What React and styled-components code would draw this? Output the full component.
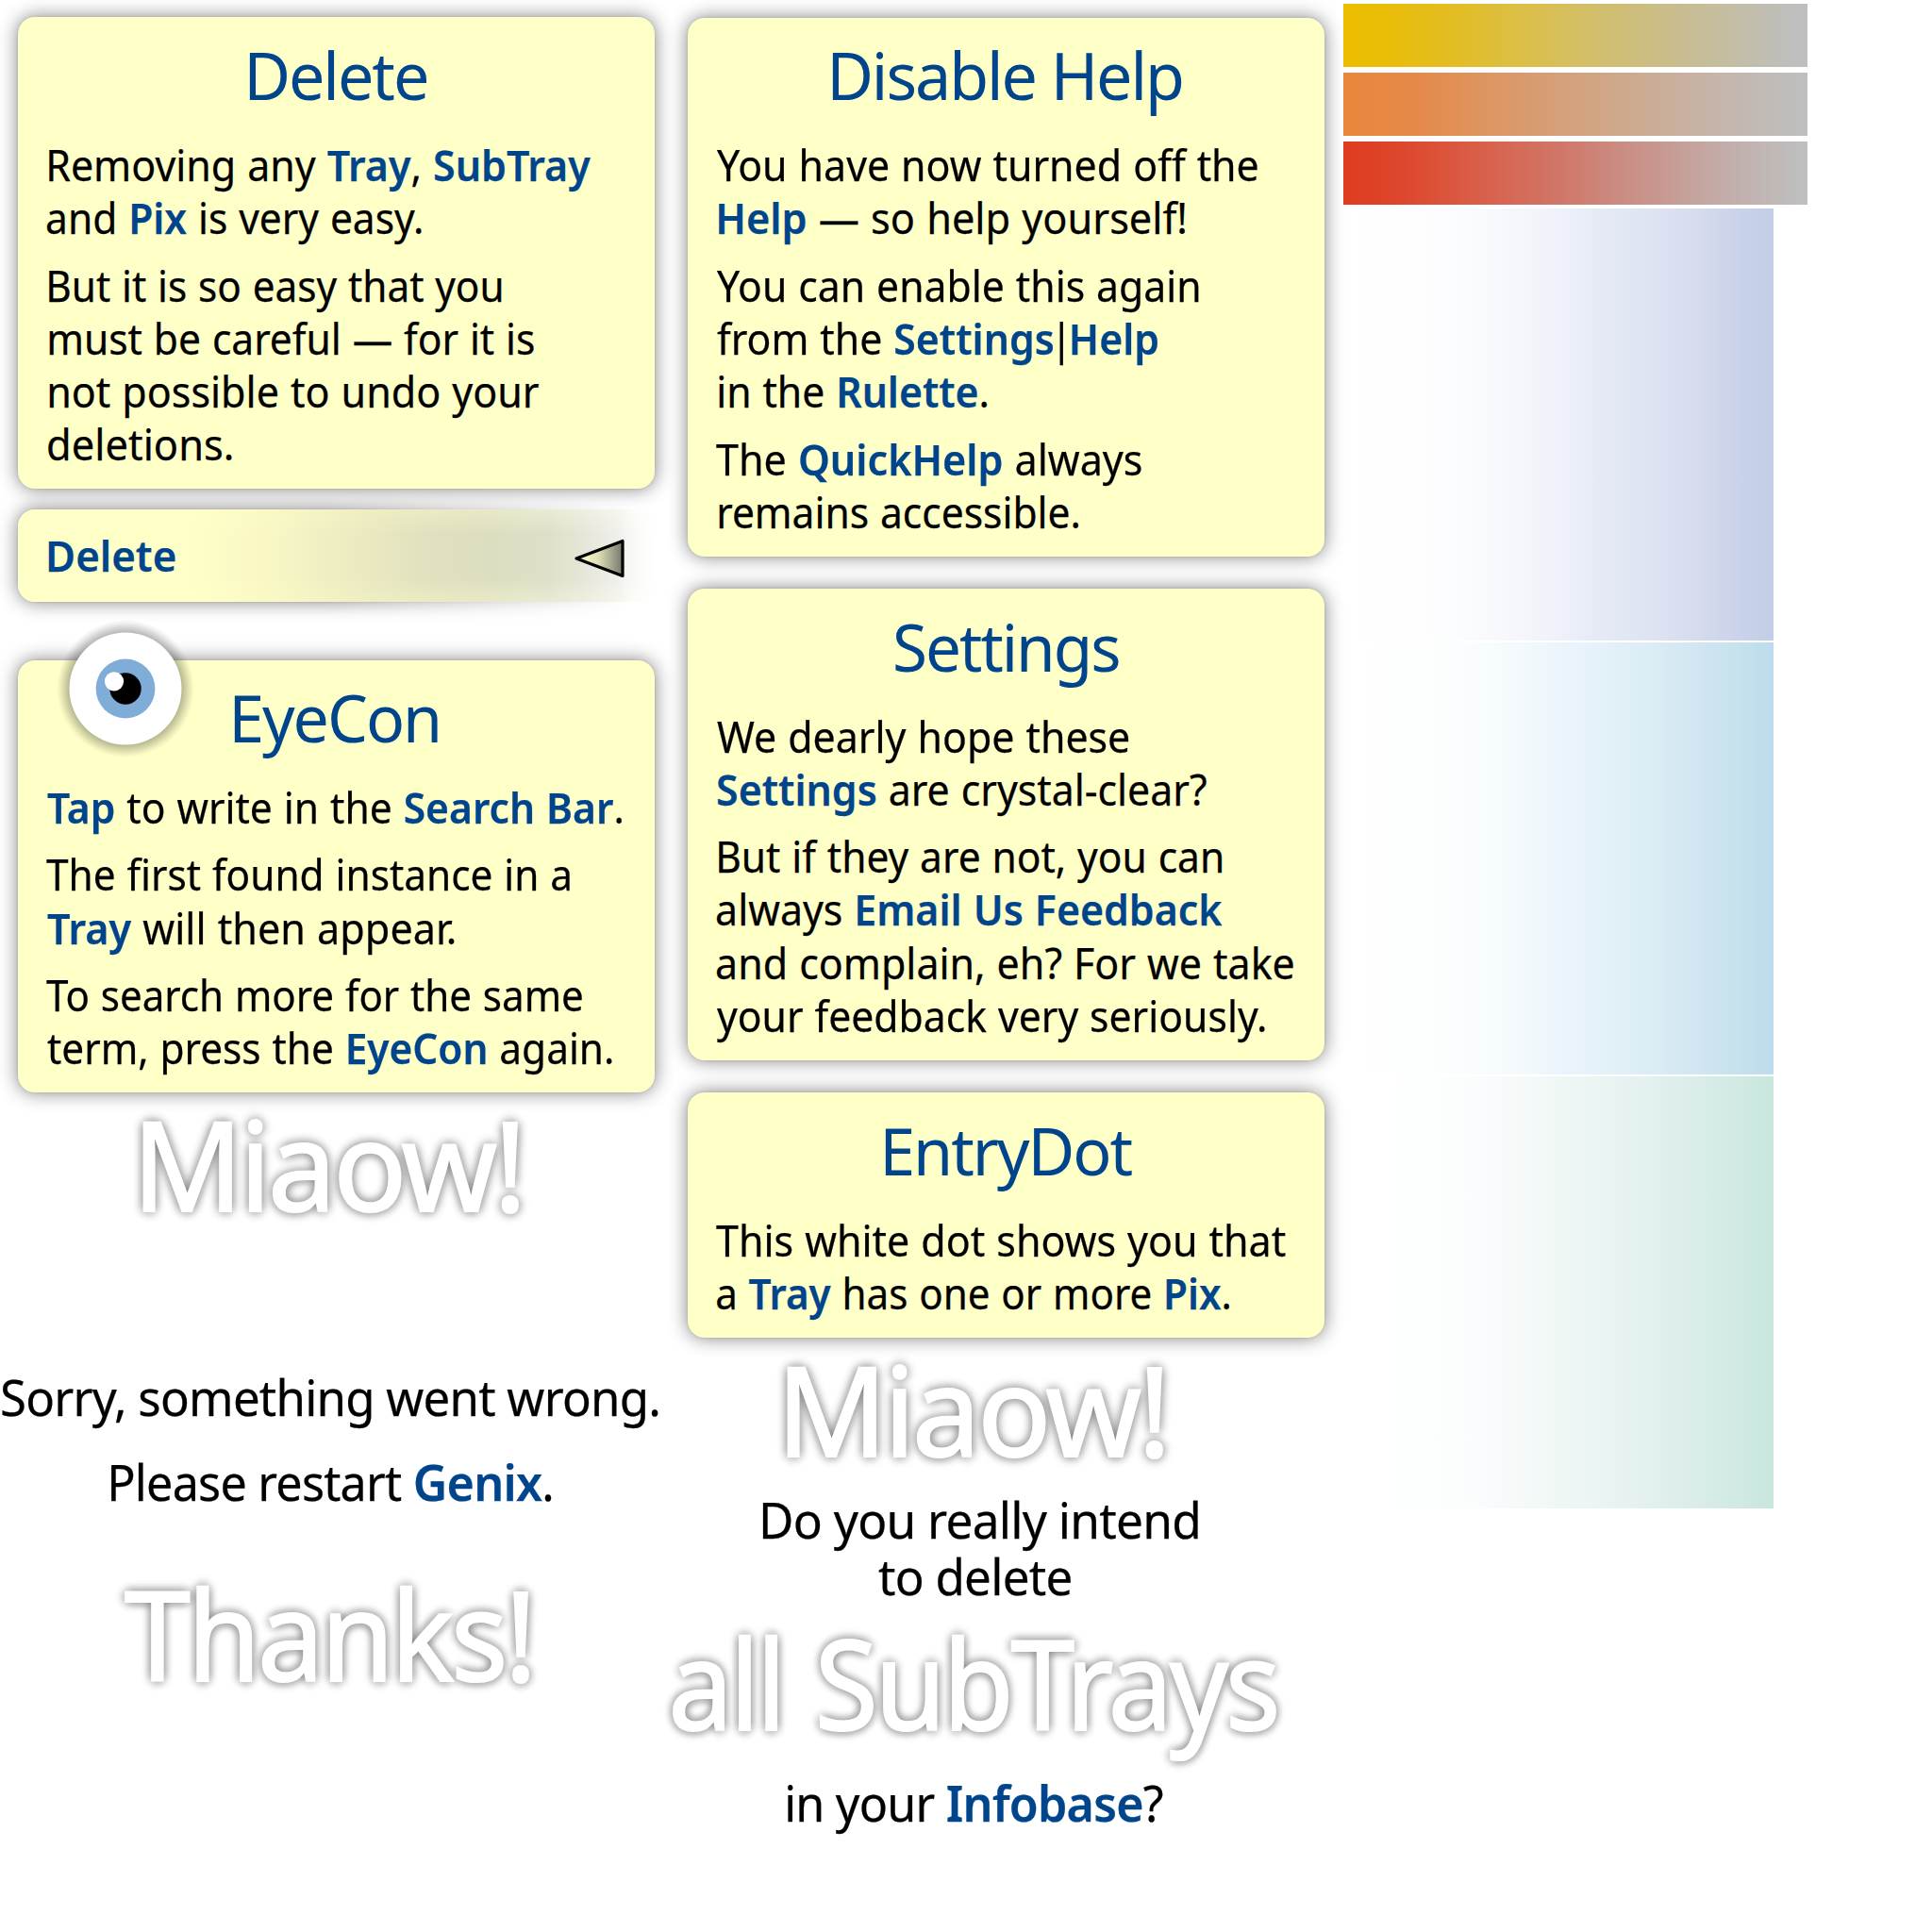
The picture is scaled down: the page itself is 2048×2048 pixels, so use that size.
import React, { useLayoutEffect, useRef, useState } from 'react';
import styled, { createGlobalStyle, css } from 'styled-components';

const FONT = '"Noto Sans", "Open Sans", sans-serif';
const NAVY = '#00458c';
const PAPER = '#ffffc8';

const GlobalStyle = createGlobalStyle`
  * { box-sizing: border-box; }
  html, body { margin: 0; padding: 0; background: #fff; }
  body { font-family: ${FONT}; color: #000; }
`;

const Page = styled.main`
  display: grid;
  grid-template-columns: 710px 714px 1fr;
  width: 2048px;
  height: 2048px;
  overflow: hidden;
  background: #fff;
`;

const Column = styled.section`
  display: flex;
  flex-direction: column;
  padding-top: ${(p) => p.$top}px;
`;

const softShadow = css`
  box-shadow: 0 0 3px rgba(0, 0, 0, 0.12), 0 0 19px 1px rgba(0, 0, 0, 0.45);
`;

const Card = styled.article`
  position: relative;
  flex: none;
  width: 675px;
  height: ${(p) => p.$h}px;
  margin: 0 0 ${(p) => p.$gap}px 19px;
  padding: ${(p) => p.$pad}px 31px 0;
  border-radius: 18px;
  background: ${PAPER};
  ${softShadow}
`;

const Row = styled.div`
  display: flex;
  flex: none;
  justify-content: ${(p) => (p.$center ? 'center' : 'flex-start')};
  white-space: pre;
`;

const Title = styled(Row)`
  height: 84px;
  line-height: 84px;
  margin-bottom: 26.1px;
  font-size: 70px;
  letter-spacing: -0.03em;
  color: ${NAVY};
`;

const Paragraph = styled.div`
  & + & { margin-top: 15px; }
`;

const BodyLine = styled(Row)`
  height: 56.28px;
  line-height: 56.28px;
  font-size: 45px;
  word-spacing: 0.02em;
  -webkit-text-stroke: 0.25px currentColor;
`;

const NoticeLine = styled(Row)`
  height: 60px;
  line-height: 60px;
  margin-top: ${(p) => p.$mt}px;
  font-size: 52px;
  letter-spacing: -0.015em;
  -webkit-text-stroke: 0.25px currentColor;
`;

const spread = (r, blur, alpha) => [[1, 0], [0.7, 0.7], [0, 1], [-0.7, 0.7], [-1, 0], [-0.7, -0.7], [0, -1], [0.7, -0.7]]
  .map(([x, y]) => `${x * r}px ${y * r}px ${blur}px rgba(0, 0, 0, ${alpha})`)
  .join(', ');

const GlowLine = styled(Row)`
  height: 160px;
  line-height: 160px;
  margin-top: ${(p) => p.$mt}px;
  font-size: 132px;
  font-weight: 450;
  letter-spacing: -0.025em;
  word-spacing: 0.04em;
  color: #fff;
  -webkit-text-stroke: 2.2px #fff;
  text-shadow: ${spread(5, 5, 0.045)}, ${spread(9, 6, 0.055)};
`;

const Notice = styled.div`
  display: flex;
  flex-direction: column;
  width: ${(p) => p.$w}px;
`;

const Term = styled.strong`
  font-weight: 600;
  color: ${NAVY};
`;

const Pipe = styled.span`
  margin: 0 -4.5px;
`;

const FitBox = styled.span`
  display: block;
  flex: none;
  width: ${(p) => p.$w}px;
  margin-left: ${(p) => p.$nudge}px;
`;

const FitText = styled.span`
  display: inline-block;
  transform-origin: 0 50%;
`;

function edgeBearing(node, last) {
  let n = node;
  while (n.nodeType !== 3) n = last ? n.lastChild : n.firstChild;
  const style = getComputedStyle(n.parentElement);
  const ctx = document.createElement('canvas').getContext('2d');
  ctx.font = `${style.fontWeight} ${style.fontSize} ${style.fontFamily}`;
  const text = n.textContent;
  const m = ctx.measureText(last ? text.slice(-1) : text[0]);
  return last ? m.width - m.actualBoundingBoxRight : -m.actualBoundingBoxLeft;
}

/* Condenses a line horizontally so that its ink is exactly `w` wide. */
function Fit({ w, nudge = 0, children }) {
  const ref = useRef(null);
  const [fit, setFit] = useState(null);
  useLayoutEffect(() => {
    const el = ref.current;
    el.style.transform = 'none';
    const spacing = parseFloat(getComputedStyle(el).letterSpacing) || 0;
    const left = edgeBearing(el, false);
    const right = edgeBearing(el, true);
    const scale = w / (el.getBoundingClientRect().width - spacing - left - right);
    const transform = `translateX(${-left * scale}px) scaleX(${scale})`;
    el.style.transform = transform;
    setFit(transform);
  }, [w]);
  return (
    <FitBox $w={w} $nudge={nudge}>
      <FitText ref={ref} style={{ transform: fit || 'none' }}>{children}</FitText>
    </FitBox>
  );
}

/* Words between asterisks are highlighted terms. */
function rich(text) {
  return text.split('*').map((part, i) => {
    if (!part) return null;
    if (part === '|') return <Pipe key={i}>|</Pipe>;
    return i % 2 ? <Term key={i}>{part}</Term> : part;
  }).filter(Boolean);
}

function HelpCard({ h, gap, pad = 18.6, title, titleW, titleNudge = 2, paragraphs, children }) {
  return (
    <Card $h={h} $gap={gap} $pad={pad}>
      {children}
      <Title $center><Fit w={titleW} nudge={titleNudge}>{title}</Fit></Title>
      {paragraphs.map((lines, i) => (
        <Paragraph key={i}>
          {lines.map(([text, from, to]) => (
            <BodyLine key={text}><Fit w={to - from} nudge={from}>{rich(text)}</Fit></BodyLine>
          ))}
        </Paragraph>
      ))}
    </Card>
  );
}

const Bar = styled.div`
  position: relative;
  flex: none;
  display: flex;
  align-items: center;
  justify-content: space-between;
  width: 675px;
  height: 97.5px;
  margin: 0 0 62.5px 19px;
  padding: 0 32px 0 33px;
`;

const fade = (from, to) => css`
  mask-image: linear-gradient(90deg, #000 ${from}, transparent ${to});
`;

const BarShade = styled.div`
  position: absolute;
  inset: 0;
  border-radius: 18px 0 0 18px;
  background: linear-gradient(90deg, ${PAPER} 0 28%, #fafac6 40%, #f0efc3 56%, #ebebc6 72%, #ecedd4 83%, #f2f2e6 91%, #fff 100%);
  ${fade('94%', '101%')}
  &::after {
    content: '';
    display: block;
    height: 100%;
    border-radius: inherit;
    background: linear-gradient(90deg, ${PAPER} 0 26%, #f9f8c5 38%, #edecc2 51%, #e1e1bf 64%, #dddec1 75%, #dfdfc8 83%, #e6e6da 89%, #efefea 94%, #fbfbfa 100%);
    mask-image: linear-gradient(180deg, rgba(0, 0, 0, 0.15), #000 25% 75%, rgba(0, 0, 0, 0.15));
  }
`;

const BarShadow = styled.div`
  position: absolute;
  inset: -24px 0 -24px -19px;
  padding: 24px 0 24px 19px;
  ${fade('50%', '96%')}
  &::before {
    content: '';
    display: block;
    height: 100%;
    border-radius: 18px 0 0 18px;
    ${softShadow}
  }
`;

const BarLabel = styled(BodyLine)`
  position: relative;
`;

const Arrow = styled.svg`
  position: relative;
  display: block;
  width: 56px;
  height: 44px;
  margin: 5px -0.5px 0 0;
`;

const Eye = styled.svg`
  position: absolute;
  left: 34px;
  top: -50px;
  width: 160px;
  height: 160px;
`;

const Swatches = styled.div`
  display: flex;
  flex-direction: column;
  gap: 6px;
  margin-bottom: 4px;
`;

const Swatch = styled.div`
  width: 492px;
  height: 67px;
  background: linear-gradient(90deg, ${(p) => p.$stops});
`;

const Panels = styled.div`
  display: flex;
  flex-direction: column;
  gap: 2px;
`;

const Panel = styled.div`
  width: 456px;
  height: 458px;
  background: linear-gradient(90deg, ${(p) => p.$stops});
`;

const swatches = [
  '#ebbe00 0, #e9bd07 9%, #e2bd24 24%, #dbbf48 39%, #d2be6b 54%, #c8bd91 73%, #c1beae 89%, #bebebe 97%',
  '#e9863c 0, #e5894a 16%, #dd955f 30%, #d59f79 46%, #cdaa8e 62%, #c7b3a5 77%, #c1bab6 90%, #bebebe 98%',
  '#df3c21 0, #dd4429 10%, #db533a 21%, #d76450 33%, #d07769 47%, #ca8b80 59%, #c79b94 70%, #c3aca9 82%, #c0b8b6 92%, #bebebe 98%',
];

const panels = [
  '#fff 0, #fefefe 17%, #fbfcfe 27%, #f7f9fd 35%, #f3f5fa 44%, #edf0f9 52%, #e5e9f5 61%, #dde3f2 73%, #d5daed 83%, #c9d2ea 93%, #c2cde7 100%',
  '#fff 0, #fdfefe 20%, #f9fdfe 30%, #f2f9fc 43%, #ebf4fc 51%, #e2f1f7 62%, #d9ebf4 74%, #d0e6f2 83%, #c5e2ed 92%, #bcdcee 100%',
  '#fff 0, #fdfffe 20%, #fafcfd 32%, #f5faf9 41%, #edf6f4 54%, #e5f2f1 67%, #deeeeb 77%, #d5ebe6 87%, #cbe7e0 97%, #c8e6de 100%',
];

export default function App() {
  return (
    <>
      <GlobalStyle />
      <Page>
        <Column $top={18.3}>
          <HelpCard
            h={500} gap={22} title="Delete" titleW={188}
            paragraphs={[
              [['Removing any *Tray*, *SubTray*', 2, 576], ['and *Pix* is very easy.', 0, 396.5]],
              [
                ['But it is so easy that you', 2, 481],
                ['must be careful — for it is', 2, 516],
                ['not possible to undo your', 2, 521],
                ['deletions.', 0.5, 195],
              ],
            ]}
          />
          <Bar>
            <BarShadow />
            <BarShade />
            <BarLabel><Fit w={134}><Term>Delete</Term></Fit></BarLabel>
            <Arrow viewBox="0 0 56 44">
              <defs>
                <linearGradient id="arrowFill" x1="0" x2="1">
                  <stop offset="0.1" stopColor="#fbfbc6" />
                  <stop offset="0.45" stopColor="#e4e3b8" />
                  <stop offset="1" stopColor="#77776c" />
                </linearGradient>
              </defs>
              <path d="M4 22 L53 3.5 V40.5 Z" fill="url(#arrowFill)" stroke="#000" strokeWidth="3.2" strokeLinejoin="round" />
            </Arrow>
          </Bar>
          <HelpCard
            h={458} gap={0} pad={17.7} title="EyeCon" titleW={216} titleNudge={-1}
            paragraphs={[
              [['*Tap* to write in the *Search Bar*.', -0.5, 608.5]],
              [['The first found instance in a', -1, 554], ['*Tray* will then appear.', -0.5, 431]],
              [['To search more for the same', -1, 567.5], ['term, press the *EyeCon* again.', -0.5, 598]],
            ]}
          >
            <Eye viewBox="0 0 160 160">
              <defs>
                <radialGradient id="eyeHalo" cx="80" cy="80" r="73" gradientUnits="userSpaceOnUse">
                  <stop offset="0.79" stopColor="#000" stopOpacity="0.32" />
                  <stop offset="0.87" stopColor="#000" stopOpacity="0.19" />
                  <stop offset="0.95" stopColor="#000" stopOpacity="0.06" />
                  <stop offset="1" stopColor="#000" stopOpacity="0" />
                </radialGradient>
              </defs>
              <circle cx="80" cy="80" r="73" fill="url(#eyeHalo)" />
              <circle cx="80" cy="80" r="59.5" fill="#fff" />
              <circle cx="80" cy="80" r="31.4" fill="#7fadd8" />
              <circle cx="80" cy="80" r="16.7" fill="#000" />
              <circle cx="68" cy="72.3" r="10.1" fill="#fff" />
            </Eye>
          </HelpCard>
          <Notice $w={700}>
            <GlowLine $center $mt={-5.5}><Fit w={397}>Miaow!</Fit></GlowLine>
            <NoticeLine $center $mt={138}><Fit w={696}>Sorry, something went wrong.</Fit></NoticeLine>
            <NoticeLine $center $mt={30}><Fit w={467} nudge={2}>{rich('Please restart *Genix*.')}</Fit></NoticeLine>
            <GlowLine $center $mt={50}><Fit w={427} nudge={-7}>Thanks!</Fit></GlowLine>
          </Notice>
        </Column>

        <Column $top={18.5}>
          <HelpCard
            h={571.5} gap={34} title="Disable Help" titleW={371}
            paragraphs={[
              [['You have now turned off the', 0, 573.5], ['*Help* — so help yourself!', 2, 496]],
              [
                ['You can enable this again', 0, 511],
                ['from the *Settings*|*Help*', 0, 467],
                ['in the *Rulette*.', 2, 286],
              ],
              [['The *QuickHelp* always', -1, 450], ['remains accessible.', 2, 383]],
            ]}
          />
          <HelpCard
            h={500} gap={34} title="Settings" titleW={237}
            paragraphs={[
              [['We dearly hope these', 0, 437], ['*Settings* are crystal-clear?', 1, 519]],
              [
                ['But if they are not, you can', 2, 535.5],
                ['always *Email Us Feedback*', 0, 536],
                ['and complain, eh? For we take', 0, 611.5],
                ['your feedback very seriously.', 0, 580.5],
              ],
            ]}
          />
          <HelpCard
            h={260} gap={0} title="EntryDot" titleW={262} titleNudge={4}
            paragraphs={[
              [['This white dot shows you that', -1, 603], ['a *Tray* has one or more *Pix*.', 0, 543]],
            ]}
          />
          <Notice $w={646}>
            <GlowLine $center $mt={-5.5}><Fit w={397}>Miaow!</Fit></GlowLine>
            <NoticeLine $center $mt={8}><Fit w={461} nudge={12}>Do you really intend</Fit></NoticeLine>
            <NoticeLine $center $mt={0}><Fit w={204}>to delete</Fit></NoticeLine>
            <GlowLine $center $mt={2}><Fit w={638.5}>all SubTrays</Fit></GlowLine>
            <NoticeLine $center $mt={18}><Fit w={398} nudge={2}>{rich('in your *Infobase*?')}</Fit></NoticeLine>
          </Notice>
        </Column>

        <Column $top={4}>
          <Swatches>{swatches.map((s) => <Swatch key={s} $stops={s} />)}</Swatches>
          <Panels>{panels.map((s) => <Panel key={s} $stops={s} />)}</Panels>
        </Column>
      </Page>
    </>
  );
}
